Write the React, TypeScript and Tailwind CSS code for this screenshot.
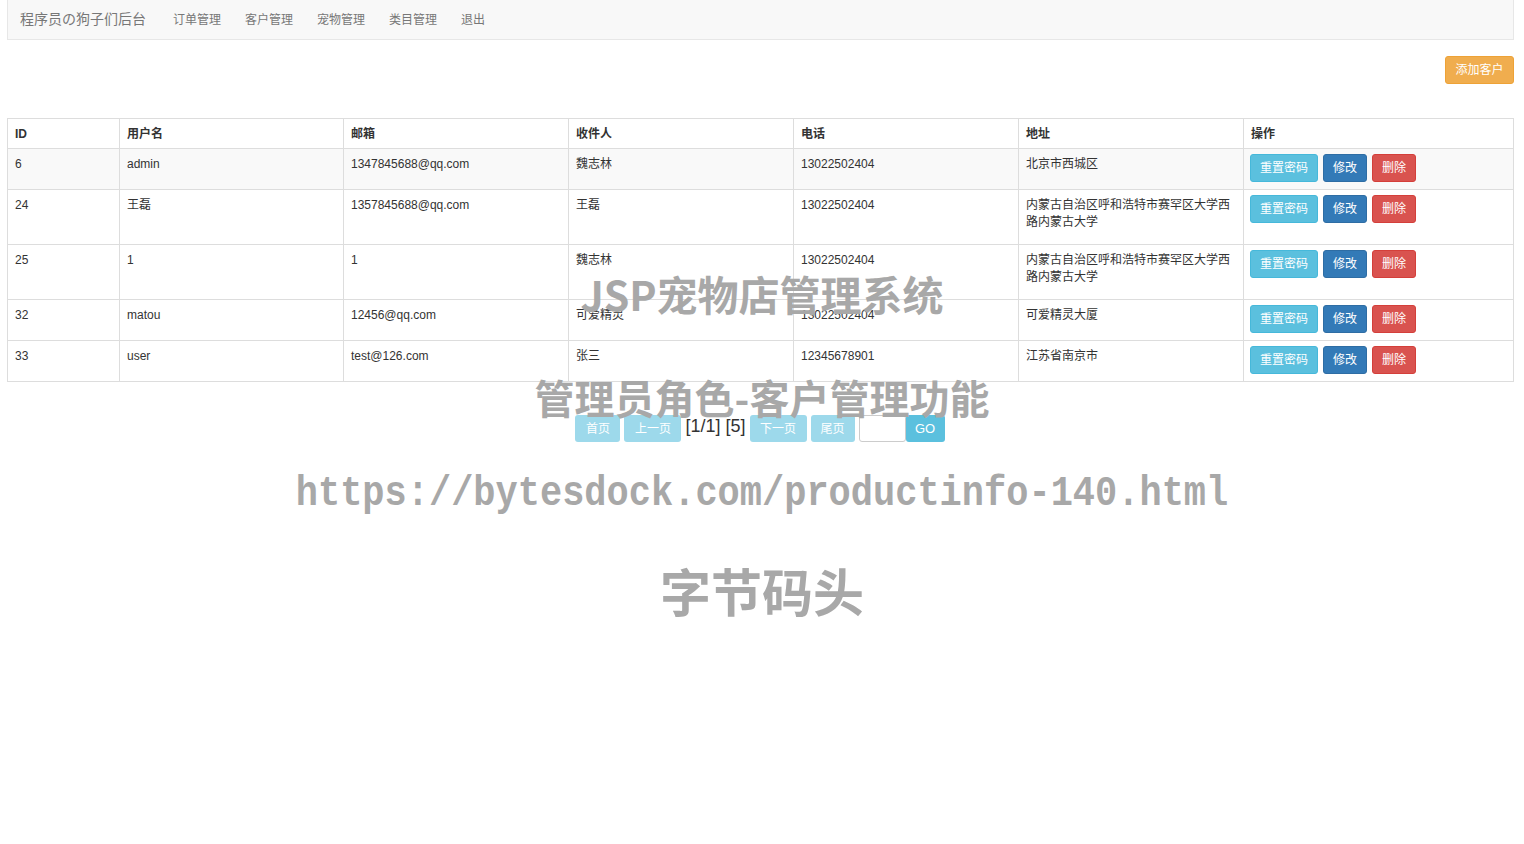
import React from 'react';

const font = { fontFamily: '"Liberation Sans", Arial, "Noto Sans CJK SC", sans-serif' };

const navItems = ['订单管理', '客户管理', '宠物管理', '类目管理', '退出'];

const customers = [
  { id: '6', name: 'admin', email: '1347845688@qq.com', receiver: '魏志林', phone: '13022502404', address: '北京市西城区', h: 'h-[41px]' },
  { id: '24', name: '王磊', email: '1357845688@qq.com', receiver: '王磊', phone: '13022502404', address: '内蒙古自治区呼和浩特市赛罕区大学西路内蒙古大学', h: 'h-[55px]' },
  { id: '25', name: '1', email: '1', receiver: '魏志林', phone: '13022502404', address: '内蒙古自治区呼和浩特市赛罕区大学西路内蒙古大学', h: 'h-[55px]' },
  { id: '32', name: 'matou', email: '12456@qq.com', receiver: '可爱精灵', phone: '13022502404', address: '可爱精灵大厦', h: 'h-[41px]' },
  { id: '33', name: 'user', email: 'test@126.com', receiver: '张三', phone: '12345678901', address: '江苏省南京市', h: 'h-[41px]' },
];

const headers = ['ID', '用户名', '邮箱', '收件人', '电话', '地址', '操作'];
const widths = ['w-[112px]', 'w-[224px]', 'w-[225px]', 'w-[225px]', 'w-[225px]', 'w-[225px]', 'w-[270px]'];

export default function App() {
  return (
    <div className="relative min-h-[844px] bg-white text-[#333] text-[12px]" style={font}>
      {/* Navbar */}
      <div className="ml-[7px] mr-[10px] h-[40px] bg-[#f8f8f8] border border-t-0 border-[#e7e7e7] flex items-center pl-[12px]">
        <span className="text-[14px] text-[#777] mr-[27px]">程序员の狗子们后台</span>
        <div className="flex gap-[24px]">
          {navItems.map((n) => (
            <span key={n} className="text-[12px] text-[#777]">{n}</span>
          ))}
        </div>
      </div>

      {/* Toolbar */}
      <div className="ml-[7px] mr-[10px] flex justify-end mt-[16px]">
        <button className="h-[28px] w-[69px] rounded-[3px] bg-[#f0ad4e] border border-[#eea236] text-white text-[12px]">添加客户</button>
      </div>

      {/* Table */}
      <div className="ml-[7px] mr-[10px] mt-[34px]">
        <table className="w-full border-collapse table-fixed">
          <thead>
            <tr className="h-[30px]">
              {headers.map((h, i) => (
                <th key={h} className={`${widths[i]} border border-[#ddd] px-[7px] text-left font-bold text-[12px] align-middle`}>{h}</th>
              ))}
            </tr>
          </thead>
          <tbody>
            {customers.map((c, idx) => (
              <tr key={c.id} className={`${c.h} ${idx === 0 ? 'bg-[#f9f9f9]' : ''}`}>
                <td className="border border-[#ddd] px-[7px] pt-[7px] align-top leading-[17px]">{c.id}</td>
                <td className="border border-[#ddd] px-[7px] pt-[7px] align-top leading-[17px]">{c.name}</td>
                <td className="border border-[#ddd] px-[7px] pt-[7px] align-top leading-[17px]">{c.email}</td>
                <td className="border border-[#ddd] px-[7px] pt-[7px] align-top leading-[17px]">{c.receiver}</td>
                <td className="border border-[#ddd] px-[7px] pt-[7px] align-top leading-[17px]">{c.phone}</td>
                <td className="border border-[#ddd] px-[7px] pt-[7px] align-top leading-[17px]">{c.address}</td>
                <td className="border border-[#ddd] px-[6px] pt-[5px] align-top">
                  <div className="flex gap-[5px]">
                    <button className="h-[28px] w-[68px] rounded-[3px] bg-[#5bc0de] border border-[#46b8da] text-white text-[12px]">重置密码</button>
                    <button className="h-[28px] w-[44px] rounded-[3px] bg-[#337ab7] border border-[#2e6da4] text-white text-[12px]">修改</button>
                    <button className="h-[28px] w-[44px] rounded-[3px] bg-[#d9534f] border border-[#d43f3a] text-white text-[12px]">删除</button>
                  </div>
                </td>
              </tr>
            ))}
          </tbody>
        </table>
      </div>

      {/* Pagination */}
      <div className="flex justify-center items-center mt-[33px] gap-[4px] pr-[4px]">
        <button className="h-[27px] w-[45px] rounded-[3px] bg-[#9dd9eb] text-white text-[12px]">首页</button>
        <button className="h-[27px] w-[57px] rounded-[3px] bg-[#9dd9eb] text-white text-[12px]">上一页</button>
        <span className="text-[18px] leading-[20px] -mt-[6px] text-[#333]">[1/1] [5]</span>
        <button className="h-[27px] w-[57px] rounded-[3px] bg-[#9dd9eb] text-white text-[12px]">下一页</button>
        <button className="h-[27px] w-[44px] rounded-[3px] bg-[#9dd9eb] text-white text-[12px]">尾页</button>
        <input className="h-[27px] w-[47px] border border-[#ccc] rounded-[3px] bg-white" />
        <button className="-ml-[4px] h-[27px] w-[39px] rounded-[3px] bg-[#5bc0de] text-white text-[13px]">GO</button>
      </div>

      {/* Watermark overlay */}
      <div className="absolute inset-0 pointer-events-none text-[#a8a8a8] font-bold" style={{ fontFamily: '"Noto Sans CJK SC", "Liberation Sans", sans-serif' }}>
        <div className="absolute left-0 right-0 top-[268px] text-center text-[41px] leading-[50px]">JSP宠物店管理系统</div>
        <div className="absolute left-0 right-0 top-[372px] text-center text-[40px] leading-[50px]">管理员角色-客户管理功能</div>
        <div className="absolute left-0 right-0 top-[468px] text-center text-[37px] leading-[50px] scale-y-[1.15]" style={{ fontFamily: '"Liberation Mono", "DejaVu Sans Mono", monospace' }}>https://bytesdock.com/productinfo-140.html</div>
        <div className="absolute left-0 right-0 top-[558px] text-center text-[51px] leading-[64px]">字节码头</div>
      </div>
    </div>
  );
}
